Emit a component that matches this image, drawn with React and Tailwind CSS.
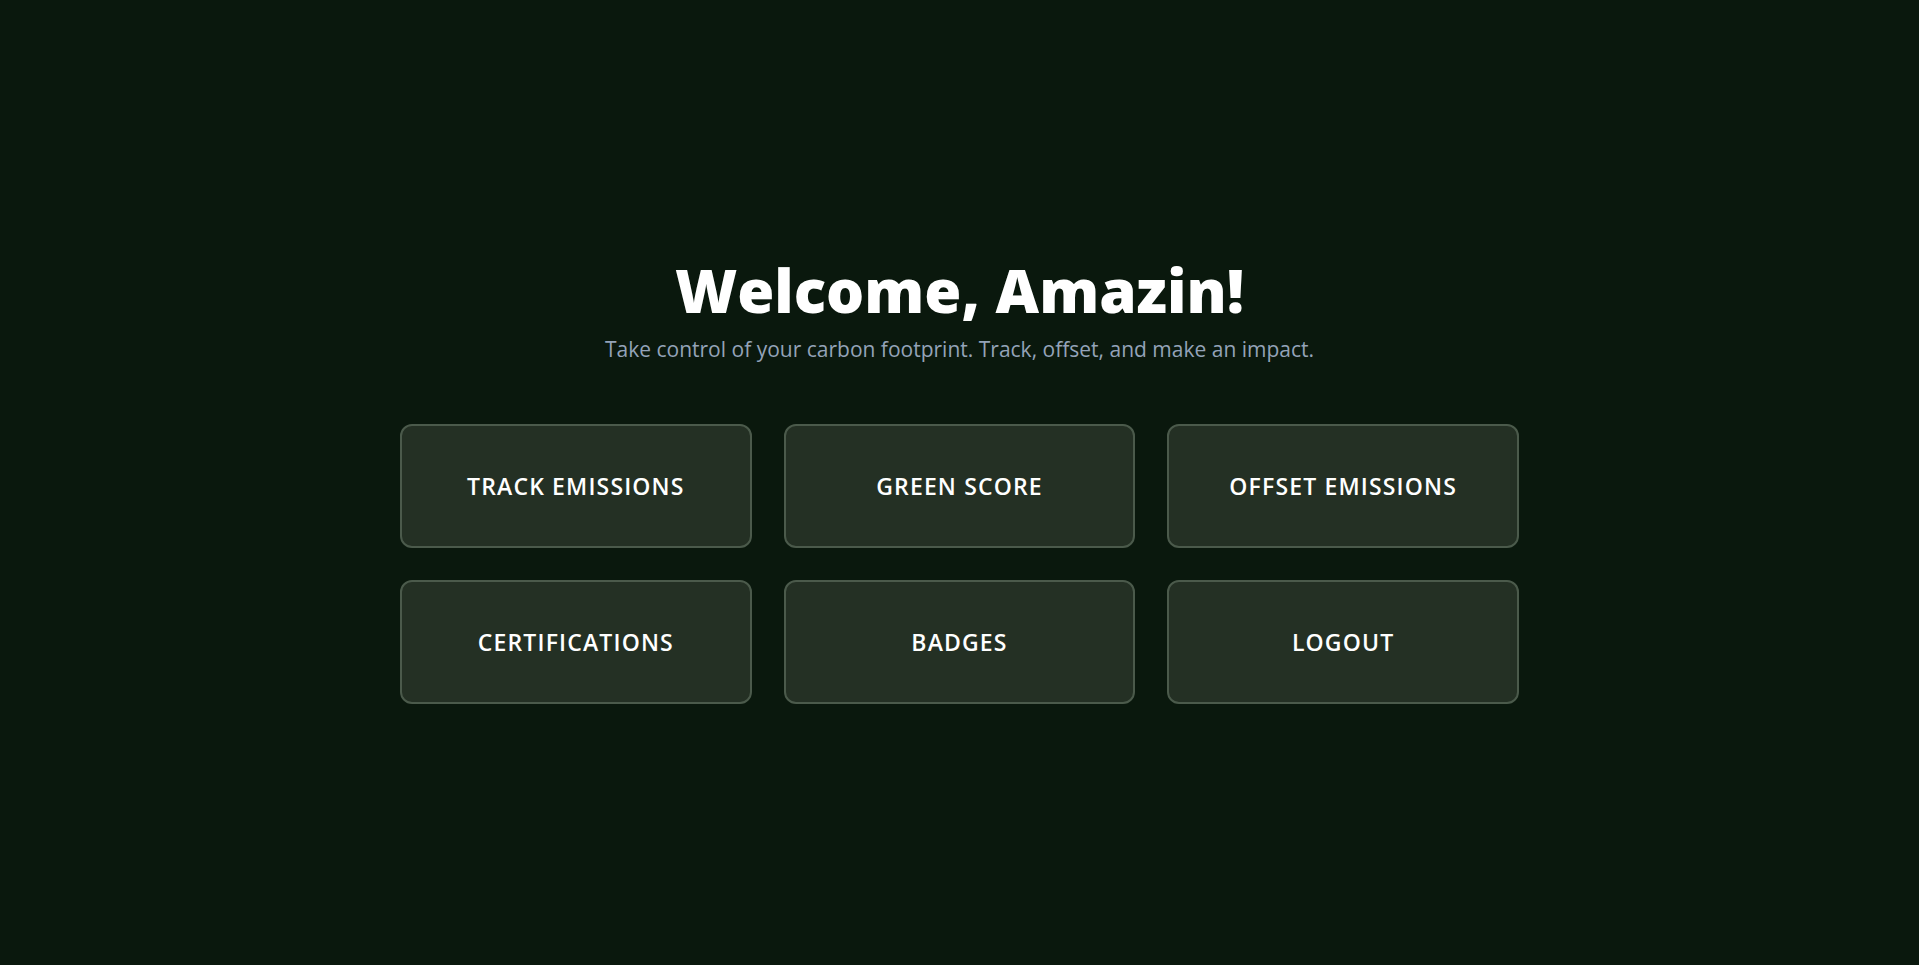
import React from "react"

const actions = [
  "Track Emissions",
  "Green Score",
  "Offset Emissions",
  "Certifications",
  "Badges",
  "Logout",
]

export default function App() {
  return (
    <div
      className="min-h-screen w-full bg-[#0a180d] flex flex-col items-center justify-center pb-1"
      style={{ fontFamily: '"Open Sans", "Noto Sans", sans-serif' }}
    >
      {/* Header */}
      <div className="flex flex-col items-center">
        <h1 className="text-[60px] leading-[1.1] font-extrabold text-white">
          Welcome, Amazin!
        </h1>
        <p className="mt-3 text-[21px] leading-7 text-[#94a3b8]">
          Take control of your carbon footprint. Track, offset, and make an impact.
        </p>
      </div>

      {/* Actions */}
      <div className="mt-[61px] grid grid-cols-3 gap-8 w-[1119px]">
        {actions.map((label) => (
          <button
            key={label}
            className="h-[124px] rounded-xl border-2 border-[#4b5a4b] bg-[#243024] text-white text-[23px] font-semibold uppercase tracking-wider cursor-pointer"
          >
            {label}
          </button>
        ))}
      </div>
    </div>
  )
}
